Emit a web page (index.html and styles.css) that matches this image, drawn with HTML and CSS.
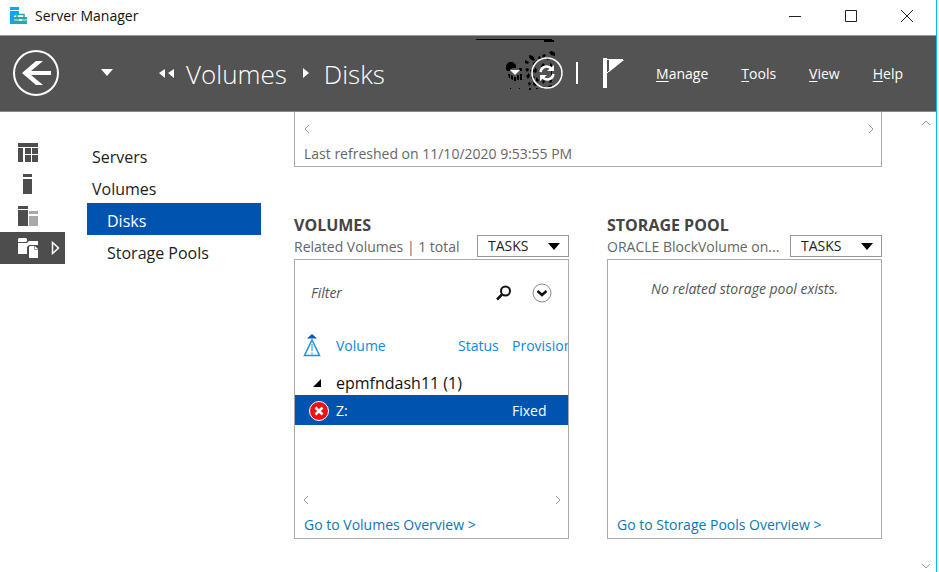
FILE: index.html
```html
<!DOCTYPE html>
<html lang="en">
<head>
<meta charset="utf-8">
<title>Server Manager</title>
<link rel="stylesheet" href="styles.css">
</head>
<body>
<div class="window">
  <header class="titlebar">
    <svg class="app-icon" width="18" height="18" viewBox="0 0 18 18" aria-hidden="true">
      <path d="M0 0h9v3H0zM0 4h9v3L4 9v8H0z" fill="#0aa5f5"/>
      <path d="M4 10h13v7H4z" fill="#2ba5a5"/>
      <path d="M7 10V7.500h7V10" fill="none" stroke="#2ba5a5" stroke-width="1.500"/>
      <path d="M4 13h5m3 0h5" fill="none" stroke="#d8f2f0"/><path d="M9 12h3v2H9z" fill="#d8f2f0"/>
    </svg>
    <span class="app-name">Server Manager</span>
    <button class="caption" aria-label="Minimize"><svg width="14" height="14" viewBox="0 0 14 14"><path d="M1 7.500h12" stroke="#222"/></svg></button>
    <button class="caption" aria-label="Maximize"><svg width="14" height="14" viewBox="0 0 14 14"><path d="M1.500 1.500h11v11h-11z" fill="none" stroke="#222"/></svg></button>
    <button class="caption" aria-label="Close"><svg width="14" height="14" viewBox="0 0 14 14"><path d="M1 1l12 12M13 1L1 13" stroke="#222"/></svg></button>
  </header>

  <div class="banner">
    <button class="back" aria-label="Back"><svg width="48" height="48" viewBox="0 0 48 48"><circle cx="24" cy="24" r="22" fill="none" stroke="#fff" stroke-width="2"/><path d="M10 24L24 12h7L19 22h20v4H19l12 10h-7z" fill="#fff"/></svg></button>
    <button class="history" aria-label="History"><svg width="14" height="8" viewBox="0 0 14 8"><path d="M1 0h12L7 7z" fill="#fff"/></svg></button>
    <nav class="crumbs" aria-label="Breadcrumb">
      <svg width="17" height="12" viewBox="0 0 17 12"><path d="M7 2v9L1 6zM16 2v9l-6-5z" fill="#fff"/></svg>
      <a href="#">Volumes</a>
      <svg class="crumb-arrow" width="7" height="12" viewBox="0 0 7 12"><path d="M0 1v10l6-5z" fill="#fff"/></svg>
      <a href="#">Disks</a>
    </nav>
    <div class="tools">
      <svg class="specks" width="90" height="60" viewBox="0 0 90 60" aria-hidden="true">
        <path d="M2 2h76v1H2zM70 3h10v2H70z"/>
        <path d="M32 32v-4l3-3h4l3 3v3h-3l-3 1v2h-3zM34 37h2v4h-1zM37 38l2 1v4l-2-1zM40 40h2v4h-2zM45 31h3v3h-2zM43 38h2v5h-2zM46 37h2v6h-2zM36 51h1v1h-1zM45 51h1v1h-1zM55 18l4 1 2 4-2 1-4-3zM51 23l4 2-1 2-3-1zM59 26l4-3 1 2-3 3-2 0zM64 20l2-1 1 3-2 1zM68 19l2-2 2 1-2 3zM75 15l3-1 3 2v3l-4-1zM72 21l3-1 1 2-3 1zM51 32l3-1 1 2-2 2zM56 33l4-1v3l-3 1zM52 39l3-3 1 3-2 3zM57 40l3-1 1 2-3 1zM54 46l2-1 1 2-2 2zM59 45l4 2-1 2-3-1zM55 51h2v2h-2zM62 51h2v1h-2zM68 49l3 1-1 2-2-1zM74 49l4-1v3h-3zM61 30l2 3-1 3-2-1zM67 29l2-3 2 2-3 3zM76 26l2 1v3l-2-1zM62 40l3 3-1 2-2-1zM68 44l2-1 1 2-2 2zM76 42l2-1v4l-3 1zM77 34h1v4h-1z"/>
      </svg>
      <button aria-label="Refresh options"><svg width="10" height="6" viewBox="0 0 10 6"><path d="M0 0h10L5 5z" fill="#fff"/></svg></button>
      <button aria-label="Refresh"><svg width="32" height="32" viewBox="0 0 32 32"><circle cx="16" cy="16" r="15" fill="none" stroke="#fff" stroke-width="1.500"/><path d="M9.500 15c1-6 8-7 11-3M22.500 17c-1 6-8 7-11 3" fill="none" stroke="#fff" stroke-width="2.500"/><path d="M23 8v6h-7zM9 24v-6h7z" fill="#fff"/></svg></button>
      <span class="divider"></span>
      <button class="flag" aria-label="Notifications"><svg width="22" height="30" viewBox="0 0 22 30"><path d="M0 0h4v30H0zM6 2h15L6 14z" fill="#fff"/><path d="M4 1.500h16M4 15l3-3" stroke="#fff" fill="none"/></svg></button>
    </div>
    <nav class="menu" aria-label="Main">
      <a href="#"><u>M</u>anage</a><a href="#"><u>T</u>ools</a><a href="#"><u>V</u>iew</a><a href="#"><u>H</u>elp</a>
    </nav>
  </div>

  <div class="content">
    <nav class="rail" aria-label="Roles">
      <a href="#" aria-label="Dashboard"><svg width="20" height="19" viewBox="0 0 20 19"><path d="M0 0h20v4H0zM0 5h5v14H0zM7 5h6v6H7zM14 5h6v6h-6zM7 12h6v7H7zM14 12h6v7h-6z" fill="#4d4d4d"/></svg></a>
      <a href="#" aria-label="Local server"><svg width="20" height="20" viewBox="0 0 20 20"><path d="M5 0h9v3H5zM5 5h9v15H5z" fill="#4d4d4d"/></svg></a>
      <a href="#" aria-label="All servers"><svg width="20" height="20" viewBox="0 0 20 20"><path d="M0 0h10v3H0zM0 4h10v16H0z" fill="#4d4d4d"/><path d="M11 5h9v3h-9zM11 10h9v10h-9z" fill="#a9a9a9"/></svg></a>
      <a href="#" class="active" aria-label="File and storage services"><svg width="20" height="20" viewBox="0 0 20 20"><path d="M0 1l1-1h7l1 1v2L8 4H0zM0 5h9l2-2h9v4h-9l-2 2v7H0z" fill="#fff"/><path d="M11 9l1-1h5l3 3v9h-9z" fill="#fff"/><path d="M16.500 8v3.500H20" fill="none" stroke="#999"/></svg><svg class="expand" width="9" height="14" viewBox="0 0 9 14"><path d="M1.500 1.500v11l6-5.500z" fill="none" stroke="#fff" stroke-width="1.500"/></svg></a>
    </nav>
    <nav class="pages" aria-label="Storage pages">
      <a href="#">Servers</a>
      <a href="#">Volumes</a>
      <a href="#" class="sub selected">Disks</a>
      <a href="#" class="sub">Storage Pools</a>
    </nav>
    <main class="main">
      <section class="disks">
        <div class="hscroll"><svg width="6" height="10" viewBox="0 0 6 10"><path d="M5 1L1 5l4 4"/></svg><svg width="6" height="10" viewBox="0 0 6 10"><path d="M1 1l4 4-4 4"/></svg></div>
        <p>Last refreshed on 11/10/2020 9:53:55 PM</p>
      </section>
      <div class="panels">
        <section class="panel">
          <div class="panel-head">
            <h2>VOLUMES</h2>
            <p>Related Volumes | 1 total</p>
            <button class="tasks">TASKS <svg width="12" height="7" viewBox="0 0 12 7"><path d="M0 0h12L6 7z"/></svg></button>
          </div>
          <div class="box">
            <div class="filter">
              <input type="text" placeholder="Filter" aria-label="Filter">
              <button aria-label="Search"><svg width="16" height="16" viewBox="0 0 16 16"><circle cx="9.500" cy="6" r="4.500" fill="none" stroke="#111" stroke-width="2"/><path d="M6 9.500L1 14.500" stroke="#111" stroke-width="2.500"/></svg></button>
              <button aria-label="Show criteria"><svg width="20" height="20" viewBox="0 0 20 20"><circle cx="10" cy="10" r="9" fill="none" stroke="#888"/><path d="M5.500 8l4.500 4 4.500-4" fill="none" stroke="#111" stroke-width="2.500"/></svg></button>
            </div>
            <table>
              <colgroup><col class="c-icon"><col><col class="c-status"><col class="c-prov"></colgroup>
              <thead><tr><th aria-label="Alert"><svg width="18" height="24" viewBox="0 0 18 24"><path d="M4 4.500L9 0l5 4.500z" fill="#0b56b0"/><path d="M9 6l7.500 15.500h-15z" fill="none" stroke="#1593e6" stroke-width="1.500"/><path d="M9 10v7m0 1.500v2" stroke="#1593e6"/></svg></th><th>Volume</th><th>Status</th><th>Provisioning</th></tr></thead>
              <tbody>
                <tr class="group"><td><svg width="9" height="9" viewBox="0 0 9 9"><path d="M8 0v8H0z"/></svg></td><td colspan="3">epmfndash11 (1)</td></tr>
                <tr class="row"><td><svg width="20" height="20" viewBox="0 0 20 20"><circle cx="10" cy="10" r="9.500" fill="#ee1111" stroke="#fff"/><path d="M6.500 6.500l7 7M13.500 6.500l-7 7" stroke="#fff" stroke-width="2.500"/></svg></td><td>Z:</td><td></td><td>Fixed</td></tr>
              </tbody>
            </table>
            <div class="hscroll bottom"><svg width="6" height="10" viewBox="0 0 6 10"><path d="M5 1L1 5l4 4"/></svg><svg width="6" height="10" viewBox="0 0 6 10"><path d="M1 1l4 4-4 4"/></svg></div>
            <a class="more" href="#">Go to Volumes Overview &gt;</a>
          </div>
        </section>
        <section class="panel">
          <div class="panel-head">
            <h2>STORAGE POOL</h2>
            <p>ORACLE BlockVolume on...</p>
            <button class="tasks">TASKS <svg width="12" height="7" viewBox="0 0 12 7"><path d="M0 0h12L6 7z"/></svg></button>
          </div>
          <div class="box">
            <p class="empty">No related storage pool exists.</p>
            <a class="more last" href="#">Go to Storage Pools Overview &gt;</a>
          </div>
        </section>
      </div>
    </main>
    <div class="vscroll"><svg width="10" height="6" viewBox="0 0 10 6"><path d="M1 5l4-4 4 4"/></svg><svg width="10" height="6" viewBox="0 0 10 6"><path d="M1 1l4 4 4-4"/></svg></div>
  </div>
</div>
</body>
</html>
```
FILE: styles.css
```css
* { box-sizing: border-box; }
body { margin: 0; background: #fff; color: #222; font: 14px/20px "Open Sans", "Noto Sans", sans-serif; }
a { color: inherit; text-decoration: none; }
button { margin: 0; padding: 0; border: 0; background: none; color: inherit; font: inherit; }
svg { display: block; flex: none; }
h2, p { margin: 0; }
.window { display: flex; flex-direction: column; min-height: 100vh; margin-right: 2px; border-right: 1px solid #00b7ff; }

.titlebar { display: flex; align-items: center; height: 35px; padding: 0 1px 3px 10px; }
.app-name { flex: 1; margin-left: 7px; color: #111; }
.caption { display: flex; justify-content: center; width: 56px; }

.banner { display: flex; align-items: center; height: 77px; padding: 0 33px 2px 12px; border-top: 1px solid #999; border-bottom: 1px solid #888; background: #535353; color: #fff; }
.history { margin-left: 40px; }
.crumbs { display: flex; flex: 1; align-items: center; margin-left: 44px; font-size: 26px; font-weight: 300; line-height: 36px; }
.crumbs a { margin-left: 11px; padding-top: 3px; }
.crumb-arrow { margin-left: 16px; }
.crumbs .crumb-arrow + a { margin-left: 14px; }
.tools { position: relative; display: flex; align-items: center; }
.tools button:nth-of-type(2) { margin-left: 11px; }
.specks { position: absolute; left: -36px; top: -20px; }
.tools button { position: relative; }
.divider { width: 2px; height: 22px; margin: 0 25px 0 13px; background: #fff; }
.menu { display: flex; gap: 33px; margin-left: 31px; padding-top: 2px; }
.menu u { text-underline-offset: 2px; }

.content { display: flex; flex: 1; align-items: stretch; }
.rail { width: 65px; padding-top: 24px; }
.rail a { display: flex; align-items: center; height: 32px; padding-left: 18px; }
.rail .active { background: #4d4d4d; }
.expand { margin-left: 13px; }
.pages { width: 174px; margin-left: 22px; padding-top: 27px; font-size: 16px; }
.pages a { display: flex; align-items: center; height: 32px; padding: 3px 5px 0; }
.pages .sub { padding-left: 20px; }
.pages .selected { background: #0054b0; color: #fff; }

.main { flex: 1; min-width: 0; margin-left: 33px; }
.disks { height: 55px; border: 1px solid #aaa; border-top: 0; padding: 12px 7px 0 9px; color: #666; }
.hscroll { display: flex; justify-content: space-between; margin-bottom: 10px; }
.hscroll path, .vscroll path { fill: none; stroke: #999; stroke-width: 1; }
.panels { display: grid; grid-template-columns: 1fr 1fr; gap: 38px; margin-top: 48px; }
.panel-head { display: grid; grid-template-columns: 1fr 92px; align-items: end; height: 41px; margin-bottom: 3px; }
.panel-head h2 { grid-column: 1 / 3; color: #444; font-size: 16px; line-height: 20px; }
.panel-head p { overflow: hidden; color: #666; white-space: nowrap; }
.tasks { display: flex; align-items: center; justify-content: space-between; height: 22px; padding: 0 8px 0 10px; border: 1px solid #999; color: #222; }
.box { display: flex; flex-direction: column; height: 280px; border: 1px solid #aaa; overflow: hidden; }
.filter { display: flex; align-items: center; height: 24px; margin: 21px 16px 27px; }
.filter input { flex: 1; min-width: 0; padding: 0; border: 0; outline: 0; background: none; font: inherit; font-style: italic; }
.filter input::placeholder { color: #555; opacity: 1; }
.filter button + button { margin-left: 20px; }
table { width: 100%; table-layout: fixed; border-collapse: collapse; }
.c-icon { width: 41px; }
.c-status { width: 54px; }
.c-prov { width: 56px; }
th, td { padding: 0; text-align: left; white-space: nowrap; overflow: hidden; }
th { height: 28px; color: #0c88dc; font-weight: 400; }
th svg { margin-left: 8px; }
.group td { height: 35px; padding-top: 11px; color: #111; font-size: 16px; }
.group svg { margin-left: 18px; }
.row td { height: 30px; padding-top: 1px; background: #0054b0; color: #fff; }
.row svg { margin-left: 14px; }
.bottom { margin: auto 7px 10px 8px; }
.more { margin: 0 9px 3px; color: #0878b8; }
.last { margin-top: auto; }
.empty { margin-top: 19px; color: #555; font-style: italic; text-align: center; }
.vscroll { display: flex; flex-direction: column; justify-content: space-between; width: 54px; padding: 8px 5px 3px 0; align-items: flex-end; }
```
